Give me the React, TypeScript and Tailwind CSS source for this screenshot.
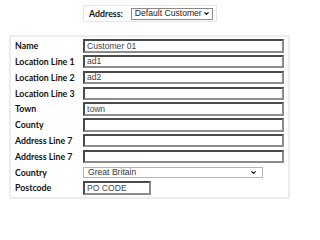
import { ChevronDown } from "lucide-react";

const rows = [
    { label: "Name", value: "Customer 01" },
    { label: "Location Line 1", value: "ad1" },
    { label: "Location Line 2", value: "ad2" },
    { label: "Location Line 3", value: "" },
    { label: "Town", value: "town" },
    { label: "County", value: "" },
    { label: "Address Line 7", value: "" },
    { label: "Address Line 7", value: "" },
];

const labelCls = "w-[68px] shrink-0 whitespace-nowrap text-[8.8px] font-bold text-[#111] font-['Lato',sans-serif]";
const inputCls =
    "h-[13.4px] border-2 border-t-[#4a4a4a] border-l-[#4a4a4a] border-b-[#8c8c8c] border-r-[#8c8c8c] bg-white px-[2px] text-[8.6px] leading-none text-[#444] font-['Liberation_Sans',Arial,sans-serif] flex items-center whitespace-nowrap";

const App = () => {
    return (
        <div className="w-[300px] h-[210px] bg-white relative overflow-hidden">
            {/* Address picker */}
            <div className="flex justify-center pt-[5px]">
                <div className="flex items-center gap-[8px] border border-[#e6e6e6] pl-[5px] pr-[4px] h-[17px] w-[134px]">
                    <span className="whitespace-nowrap text-[8.8px] font-bold text-[#111] font-['Lato',sans-serif]">Address:</span>
                    <div className="w-[82px] shrink-0 flex items-center justify-between whitespace-nowrap border border-[#8a8a8a] h-[12px] pl-[3px] pr-[2px] text-[8.6px] text-[#222] font-['Liberation_Sans',Arial,sans-serif]">
                        Default Customer
                        <ChevronDown className="w-[7px] h-[7px] text-[#111]" strokeWidth={4} />
                    </div>
                </div>
            </div>

            {/* Form panel */}
            <div className="mx-[9px] mt-[13px] w-[281px] border-2 border-[#ececec] px-[4px] pt-[1px] pb-[1px]">
                {rows.map((r, i) => (
                    <div key={i} className="flex items-center h-[15.8px]">
                        <div className={labelCls}>{r.label}</div>
                        <div className={`${inputCls} w-[202px]`}>{r.value}</div>
                    </div>
                ))}
                <div className="flex items-center h-[15.8px]">
                    <div className={labelCls}>Country</div>
                    <div className="w-[180px] h-[11.5px] border border-[#b5b5b5] bg-white flex items-center justify-between pl-[4px] pr-[5px] text-[8.6px] text-[#333] font-['Liberation_Sans',Arial,sans-serif]">
                        Great Britain
                        <ChevronDown className="w-[7px] h-[7px] text-[#111]" strokeWidth={4} />
                    </div>
                </div>
                <div className="flex items-center h-[15.8px]">
                    <div className={labelCls}>Postcode</div>
                    <div className={`${inputCls} w-[68px] text-[#222]`}>PO CODE</div>
                </div>
            </div>
        </div>
    );
};

export default App;
